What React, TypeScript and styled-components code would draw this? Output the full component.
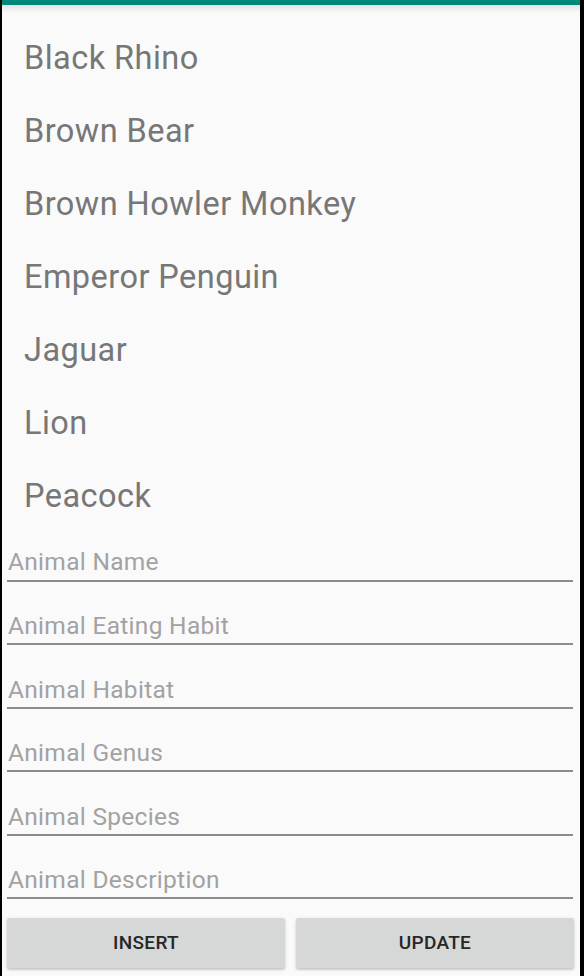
import React from "react";
import styled, { createGlobalStyle } from "styled-components";

const Global = createGlobalStyle`
  html, body { margin: 0; padding: 0; background: #000; }
  body { font-family: Roboto, "Noto Sans", "Liberation Sans", sans-serif; }
  * { box-sizing: border-box; }
`;

const Screen = styled.div`
  margin: 0 4px 0 2px;
  width: 578px;
  height: 976px;
  background: #fafafa;
  display: flex;
  flex-direction: column;
  position: relative;
  overflow: hidden;
`;

const TopBar = styled.div`
  height: 5px;
  background: #00897b;
  flex: none;
  position: relative;
  &::after {
    content: "";
    position: absolute;
    left: 0;
    right: 0;
    top: 5px;
    height: 8px;
    background: linear-gradient(rgba(0, 0, 0, 0.09), rgba(0, 0, 0, 0));
  }
`;

const List = styled.ul`
  list-style: none;
  margin: 0;
  padding: 16.5px 0 0 0;
`;

const Item = styled.li`
  height: 73px;
  line-height: 73px;
  padding-left: 22px;
  font-size: 32.5px;
  letter-spacing: 0.45px;
  color: #777777;
  white-space: nowrap;
`;

const Form = styled.div`
  display: flex;
  flex-direction: column;
  gap: 15.1px;
  padding: 0.5px 7px 0 5px;
`;

const Field = styled.input`
  display: block;
  width: 100%;
  border: none;
  border-bottom: 2px solid #8c8c8c;
  background: transparent;
  padding: 14.8px 0 3.7px 1px;
  height: 48.5px;
  line-height: 28px;
  font-family: inherit;
  font-size: 24.5px;
  letter-spacing: 0.3px;
  color: #333;
  outline: none;
  &::placeholder {
    color: #a2a2a2;
    opacity: 1;
  }
`;

const Buttons = styled.div`
  display: flex;
  gap: 11px;
  padding: 0 6px 0 5px;
  margin-top: 19px;
`;

const Button = styled.button`
  flex: 1;
  height: 50px;
  border: none;
  border-radius: 2px;
  background: #d6d7d7;
  box-shadow: 0 2px 2px rgba(0, 0, 0, 0.14), 0 1px 4px rgba(0, 0, 0, 0.1);
  font-family: inherit;
  font-weight: 500;
  font-size: 19px;
  letter-spacing: 0.3px;
  color: #262626;
  text-transform: uppercase;
  padding: 0 0 1px 0;
`;

const animals = [
  "Black Rhino",
  "Brown Bear",
  "Brown Howler Monkey",
  "Emperor Penguin",
  "Jaguar",
  "Lion",
  "Peacock",
];

const fields = [
  "Animal Name",
  "Animal Eating Habit",
  "Animal Habitat",
  "Animal Genus",
  "Animal Species",
  "Animal Description",
];

export default function App() {
  return (
    <>
      <Global />
      <Screen>
        <TopBar />
        <List>
          {animals.map((a) => (
            <Item key={a}>{a}</Item>
          ))}
        </List>
        <Form>
          {fields.map((f) => (
            <Field key={f} placeholder={f} />
          ))}
        </Form>
        <Buttons>
          <Button>Insert</Button>
          <Button>Update</Button>
        </Buttons>
      </Screen>
    </>
  );
}
